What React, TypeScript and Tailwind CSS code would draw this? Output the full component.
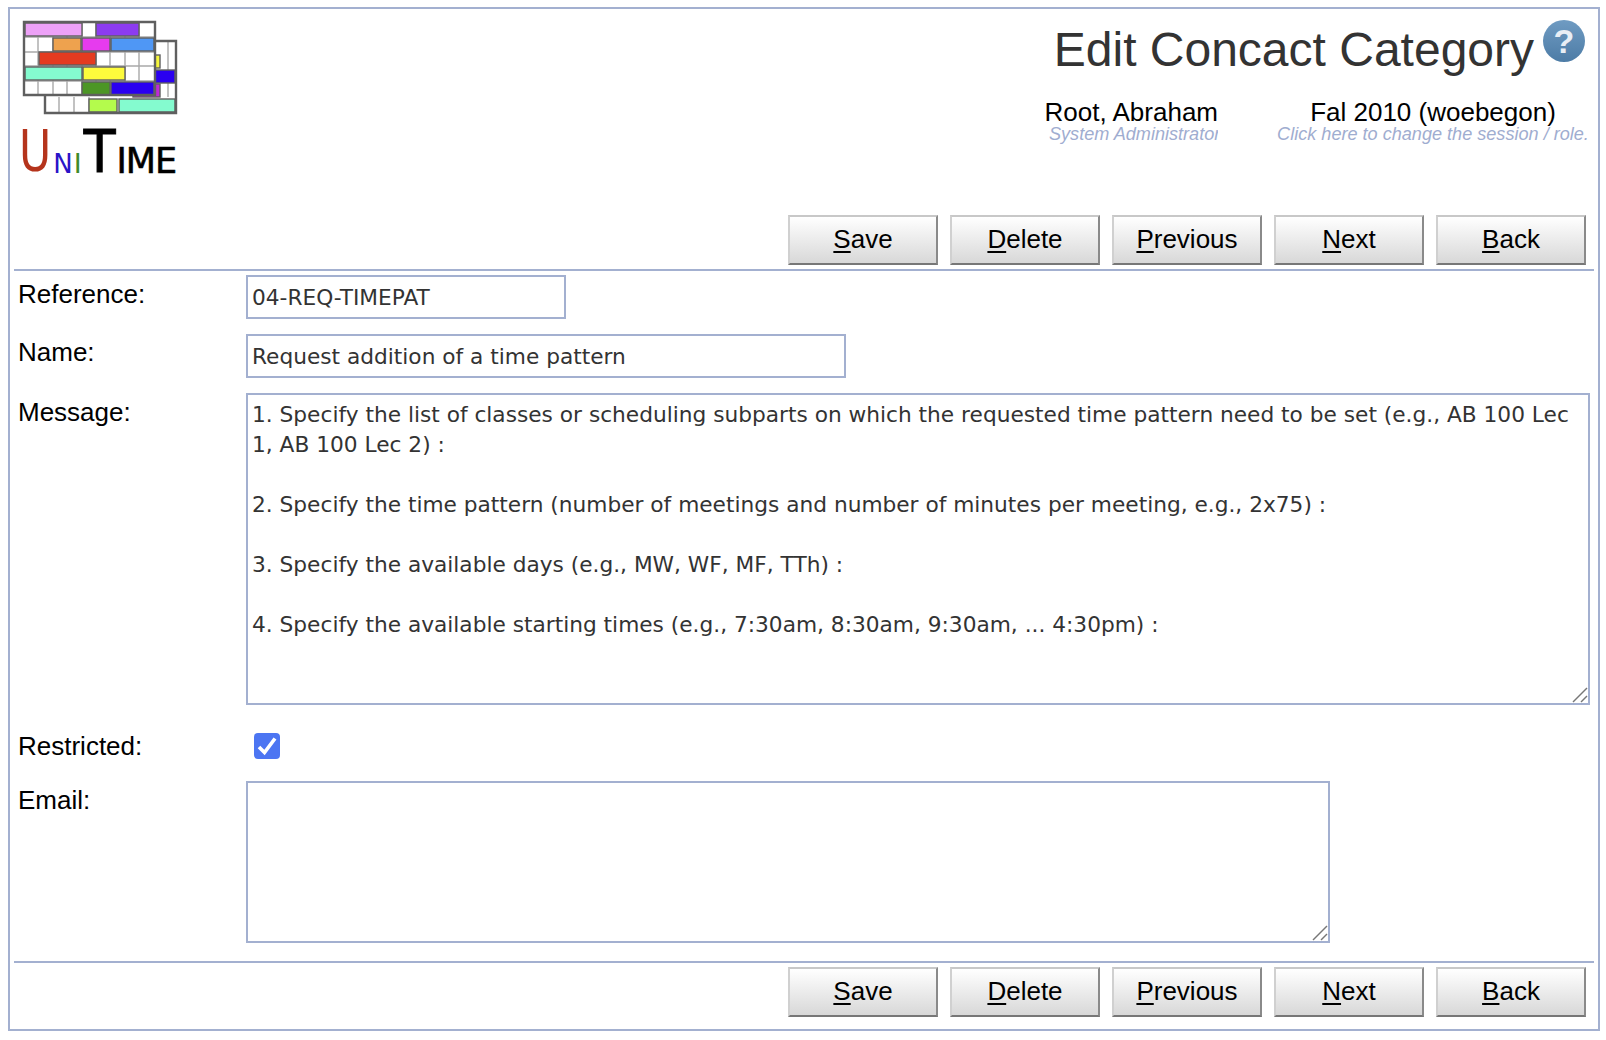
const SANS = "font-['Liberation_Sans',Arial,sans-serif]";

const grey = "#5f5f5f";

// timetable blocks of the logo: x, y, w, h, colour
const logoBlocks: [number, number, number, number, string][] = [
    [25, 23, 57, 13, "#eda1f7"],
    [96, 23, 43, 13, "#8c3bf0"],
    [53, 38, 28, 13, "#eea24e"],
    [82, 38, 28, 13, "#e63bee"],
    [111, 38, 43, 13, "#4f97f5"],
    [39, 52, 57, 13, "#e43b20"],
    [155, 55, 5, 13, "#f6f63c"],
    [25, 67, 57, 13, "#84fbcf"],
    [83, 67, 42, 13, "#fdfb3c"],
    [155, 70, 20, 13, "#2a00f0"],
    [133, 84, 27, 13, "#c02ad8"],
    [82, 82, 28, 13, "#4c9626"],
    [111, 82, 43, 13, "#2a00f0"],
    [89, 99, 28, 13, "#b4fb4c"],
    [119, 99, 56, 13, "#84fbcf"],
];

const LogoGrid = () => (
    <svg width="180" height="120" viewBox="0 0 180 120" className="block">
        <g style={{ filter: "blur(0.5px)" }}>
            <rect x="24" y="22" width="131" height="73" fill="#fff" />
            <rect x="45" y="97" width="131" height="17" fill="#fff" />
            <rect x="154" y="41" width="22" height="56" fill="#fff" />
            <g stroke="#a8a8a8" strokeWidth="1.4">
                {[38, 53, 67, 82, 96, 110, 125, 139].map((x) => (
                    <line key={x} x1={x} y1="22" x2={x} y2="95" />
                ))}
                {[59, 74, 89].map((x) => (
                    <line key={x} x1={x} y1="97" x2={x} y2="113" />
                ))}
                <line x1="168" y1="41" x2="168" y2="97" />
                {[37, 52, 66, 81].map((y) => (
                    <line key={y} x1="24" y1={y} x2="155" y2={y} />
                ))}
            </g>
            {logoBlocks.map(([x, y, w, h, c], i) => (
                <rect key={i} x={x} y={y} width={w} height={h} fill={c} stroke={grey} strokeWidth="1.4" />
            ))}
            <path
                d="M155 41 H176 V113 H45 V96 M24 22 H155 V95 H24 Z"
                fill="none"
                stroke={grey}
                strokeWidth="2.4"
            />
        </g>
    </svg>
);

const Logo = () => (
    <div className="w-[180px]">
        <LogoGrid />
        <div className="flex h-[56px] items-baseline pl-[19px] pt-[9px] font-['DejaVu_Sans',sans-serif] leading-none">
            <span className="inline-block origin-bottom scale-y-[1.3] text-[44px] text-[#b5341c]">U</span>
            <span className="ml-[2px] text-[26px] text-[#2a14c8]">N</span>
            <span className="ml-[1px] text-[27px] text-[#3f8a2a]">I</span>
            <span className="ml-[2px] inline-block origin-bottom scale-y-[1.12] text-[52px] text-black [-webkit-text-stroke:1px_black]">
                T
            </span>
            <span className="ml-[1px] text-[35px] tracking-[-1px] text-black [-webkit-text-stroke:0.6px_black]">IME</span>
        </div>
    </div>
);

const HelpIcon = () => (
    <div
        className={`flex h-[42px] w-[42px] items-center justify-center rounded-full bg-gradient-to-b from-[#6f9bc2] to-[#4d7ca6] text-[34px] font-bold leading-none text-[#e8eef5] ${SANS}`}
    >
        ?
    </div>
);

const UserBlock = ({
    title,
    sub,
    className,
    subClass,
}: {
    title: string;
    sub: string;
    className: string;
    subClass?: string;
}) => (
    <div className={`flex flex-col items-center ${className}`}>
        <div className="whitespace-nowrap text-[26px] leading-[24px] text-black">{title}</div>
        <div className={`overflow-hidden whitespace-nowrap text-[18.1px] leading-[20px] italic text-[#9fadd0] ${subClass ?? ""}`}>
            {sub}
        </div>
    </div>
);

const Btn = ({ label }: { label: string }) => (
    <button
        className={`h-[50px] w-[150px] border-2 border-t-[#c8c8c8] border-l-[#d0d0d0] border-r-[#8a8a8a] border-b-[#777777] bg-gradient-to-b from-white to-[#d8d8d8] pb-[2px] text-[26px] leading-none text-black ${SANS}`}
    >
        <span className="underline decoration-2 underline-offset-[3px]">{label[0]}</span>
        {label.slice(1)}
    </button>
);

const Buttons = () => (
    <div className="flex justify-end gap-3 pr-[8px]">
        {["Save", "Delete", "Previous", "Next", "Back"].map((b) => (
            <Btn key={b} label={b} />
        ))}
    </div>
);

const inputCls =
    "block border-2 border-[#a3b0d0] bg-white px-[4px] text-[21.7px] leading-[30px] text-[#333333] font-['DejaVu_Sans',Verdana,sans-serif] outline-none";

const message = `1. Specify the list of classes or scheduling subparts on which the requested time pattern need to be set (e.g., AB 100 Lec 1, AB 100 Lec 2) :

2. Specify the time pattern (number of meetings and number of minutes per meeting, e.g., 2x75) :

3. Specify the available days (e.g., MW, WF, MF, TTh) :

4. Specify the available starting times (e.g., 7:30am, 8:30am, 9:30am, ... 4:30pm) :`;

const Label = ({ children, className }: { children: string; className?: string }) => (
    <div className={`w-[232px] shrink-0 pl-[4px] text-[26px] leading-[30px] text-black ${className ?? ""}`}>
        {children}
    </div>
);

// the drag handle of a textarea, as large as on the reference
const Grip = () => (
    <svg width="16" height="16" viewBox="0 0 16 16" className="absolute bottom-[2px] right-[2px]">
        <line x1="1" y1="15" x2="15" y2="1" stroke="#777" strokeWidth="1.5" />
        <line x1="9" y1="15" x2="15" y2="9" stroke="#777" strokeWidth="1.5" />
    </svg>
);

export default function App() {
    return (
        <div className={`h-[1040px] overflow-hidden bg-white pl-[8px] pr-[6px] pt-[7px] ${SANS}`}>
            <div className="h-[1024px] border-2 border-[#a3b0d0] pl-[4px] pr-[4px]">
                {/* header */}
                <div className="flex h-[206px] justify-between">
                    <div className="-ml-[14px] -mt-[9px]">
                        <Logo />
                    </div>
                    <div className="flex flex-col items-end pr-[6px]">
                        <div className="flex h-[70px] items-start pt-[13px] pr-[3px]">
                            <h1 className="text-[48px] leading-[56px] text-[#333333]">Edit Concact Category</h1>
                            <div className="-mt-[2px] ml-[9px]">
                                <HelpIcon />
                            </div>
                        </div>
                        <div className="mt-[21px] flex gap-[60px]">
                            <UserBlock
                                title="Root, Abraham"
                                sub="System Administrator"
                                className="w-[172px] !items-end"
                                subClass="w-[169px]"
                            />
                            <UserBlock
                                title="Fal 2010 (woebegon)"
                                sub="Click here to change the session / role."
                                className="w-[310px]"
                            />
                        </div>
                    </div>
                </div>
                <Buttons />
                <div className="mt-[4px] border-t-2 border-[#a3b0d0]" />

                {/* form */}
                <div className="mt-[4px] flex flex-col">
                    <div className="flex">
                        <Label className="pt-[4px]">Reference:</Label>
                        <input readOnly value="04-REQ-TIMEPAT" className={`${inputCls} h-[44px] w-[320px]`} />
                    </div>
                    <div className="mt-[15px] flex">
                        <Label className="pt-[3px]">Name:</Label>
                        <input readOnly value="Request addition of a time pattern" className={`${inputCls} h-[44px] w-[600px]`} />
                    </div>
                    <div className="mt-[15px] flex">
                        <Label className="pt-[4px]">Message:</Label>
                        <div className="relative">
                            <textarea readOnly value={message} className={`${inputCls} h-[312px] w-[1344px] resize-none py-[5px]`} />
                            <Grip />
                        </div>
                    </div>
                    <div className="mt-[26px] flex items-center">
                        <Label>Restricted:</Label>
                        <div className="ml-[8px] h-[26px] w-[26px] rounded-[4px] bg-[#4c75f2]">
                            <svg width="26" height="26" viewBox="0 0 26 26" className="block">
                                <path d="M5 14 L10.5 19.5 L21 5.5" fill="none" stroke="#fff" strokeWidth="3.6" />
                            </svg>
                        </div>
                    </div>
                    <div className="mt-[20px] flex">
                        <Label className="pt-[4px]">Email:</Label>
                        <div className="relative">
                            <textarea readOnly className={`${inputCls} h-[162px] w-[1084px] resize-none`} />
                            <Grip />
                        </div>
                    </div>
                </div>
                <div className="mt-[18px] border-t-2 border-[#a3b0d0]" />
                <div className="mt-[4px]">
                    <Buttons />
                </div>
            </div>
        </div>
    );
}
